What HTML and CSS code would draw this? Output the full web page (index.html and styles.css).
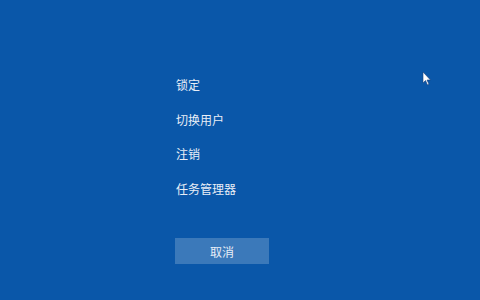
FILE: index.html
```html
<html>
  <head>
    <title>Security options</title>
    <link rel="stylesheet" href="styles.css">
  </head>
  <body>
    <div class="screen">
      <ul class="options">
        <li>锁定</li>
        <li>切换用户</li>
        <li>注销</li>
        <li>任务管理器</li>
      </ul>
      <button class="cancel">取消</button>
      <svg class="cursor" width="10" height="15" viewBox="0 0 10 15">
        <path d="M1 1 L1 12 L3.5 9.5 L5.5 14 L7 13.3 L5 9 L8.5 9 Z" fill="#fff" stroke="#1a3f7a" stroke-width="0.6"/>
      </svg>
    </div>
  </body>
</html>
```
FILE: styles.css
```css
html, body {
  margin: 0;
  padding: 0;
}
body {
  background: #0a57a9;
  font-family: "Noto Sans CJK SC", "Noto Sans", sans-serif;
  color: #e8eef7;
}
.screen {
  position: relative;
  width: 480px;
  height: 300px;
  padding: 76px 0 0 176px;
  box-sizing: border-box;
}
.options {
  list-style: none;
  margin: 0;
  padding: 0;
  display: flex;
  flex-direction: column;
  gap: 17px;
}
.options li {
  font-size: 12px;
  line-height: 17.5px;
}
.cancel {
  margin-top: 41px;
  margin-left: -1px;
  width: 94px;
  height: 26px;
  border: none;
  background: #3b79ba;
  color: #e8eef7;
  font-family: inherit;
  font-size: 12px;
  padding: 0;
}
.cursor {
  position: absolute;
  left: 422px;
  top: 71px;
}
```
